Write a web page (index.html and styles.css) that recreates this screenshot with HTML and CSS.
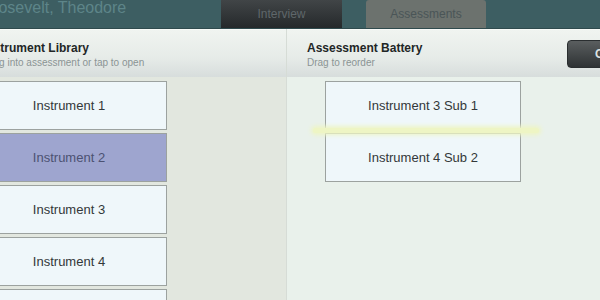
FILE: index.html
```html
<!DOCTYPE html>
<html lang="en">
<head>
    <meta charset="UTF-8">
    <meta name="viewport" content="width=device-width, initial-scale=1.0">
    <title>Assessments</title>
    <link rel="stylesheet" href="styles.css">
</head>
<body>
    <header class="topbar">
        <span class="patient">Roosevelt, Theodore</span>
        <nav class="tabs">
            <div class="tab tab-dark">Interview</div>
            <div class="tab tab-current">Assessments</div>
        </nav>
    </header>
    <main class="panes">
        <section class="pane library">
            <div class="pane-head">
                <div>
                    <h2>Instrument Library</h2>
                    <p>Drag into assessment or tap to open</p>
                </div>
            </div>
            <ul class="items">
                <li class="item">Instrument 1</li>
                <li class="item item-selected">Instrument 2</li>
                <li class="item">Instrument 3</li>
                <li class="item">Instrument 4</li>
                <li class="item">Instrument 5</li>
            </ul>
        </section>
        <section class="pane battery">
            <div class="pane-head">
                <div>
                    <h2>Assessment Battery</h2>
                    <p>Drag to reorder</p>
                </div>
                <button class="clear-btn">Clear</button>
            </div>
            <ul class="items">
                <li class="item">Instrument 3 Sub 1</li>
                <li class="item">Instrument 4 Sub 2</li>
            </ul>
            <div class="drop-line"></div>
        </section>
    </main>
</body>
</html>
```

FILE: styles.css
```css
body {
    margin: 0;
    width: 600px;
    height: 300px;
    overflow: hidden;
    font-family: "Liberation Sans", Arial, sans-serif;
    background-color: #e9f1eb;
}
.topbar {
    display: flex;
    height: 28px;
    background-color: #3d5e62;
    border-bottom: 1px solid #2f4a4d;
}
.patient {
    width: 243px;
    margin-left: -22px;
    flex-shrink: 0;
    font-size: 16px;
    line-height: 16px;
    color: #5d8589;
    white-space: nowrap;
}
.tabs {
    display: flex;
    gap: 24px;
}
.tab {
    width: 121px;
    height: 28px;
    display: flex;
    justify-content: center;
    align-items: center;
    font-size: 12px;
}
.tab-dark {
    background: linear-gradient(#414547, #25292b);
    color: #5f676a;
}
.tab-current {
    width: 120px;
    background-color: #6c726e;
    color: #4a5557;
    border-radius: 3px 3px 0 0;
}
.panes {
    display: flex;
    height: 271px;
    overflow: hidden;
}
.pane {
    position: relative;
}
.library {
    width: 323px;
    margin-left: -37px;
    flex-shrink: 0;
    background-color: #e2e7df;
    border-right: 1px solid #d6dcd6;
}
.battery {
    flex: 1;
    background-color: #e9f1eb;
}
.pane-head {
    display: flex;
    justify-content: space-between;
    align-items: center;
    height: 47px;
    padding-left: 20px;
    background: linear-gradient(#f0f4f0, #e6ebe8 60%, #d7dddc);
    border-top: 1px solid #f8faf8;
}
.pane-head h2 {
    margin: 0;
    padding-top: 1px;
    font-size: 12px;
    color: #222626;
}
.pane-head p {
    margin: 2px 0 0;
    font-size: 10px;
    color: #8b9494;
    white-space: nowrap;
}
.items {
    list-style: none;
    margin: 0;
    padding: 4px 0 0;
    display: flex;
    flex-direction: column;
    gap: 3px;
}
.library .items {
    padding-left: 8px;
}
.battery .items {
    padding-left: 38px;
}
.item {
    width: 194px;
    height: 47px;
    flex-shrink: 0;
    display: flex;
    justify-content: center;
    align-items: center;
    background-color: #eff7fa;
    border: 1px solid #9ca29f;
    font-size: 13px;
    color: #333839;
}
.item-selected {
    background-color: #9ea5cf;
    color: #4c5272;
}
.clear-btn {
    width: 60px;
    height: 28px;
    margin-right: -27px;
    padding: 0 0 0 27px;
    border: 1px solid #2a2e30;
    border-radius: 4px;
    background: linear-gradient(#5a5e5f, #2e3234);
    color: #dde2e2;
    font-family: inherit;
    font-size: 12px;
    font-weight: bold;
    text-align: left;
}
.drop-line {
    position: absolute;
    left: 26px;
    top: 99px;
    width: 226px;
    height: 5px;
    background-color: #eef5c4;
    box-shadow: 0 0 4px 2px #eef5c4;
    border-radius: 3px;
}
```
